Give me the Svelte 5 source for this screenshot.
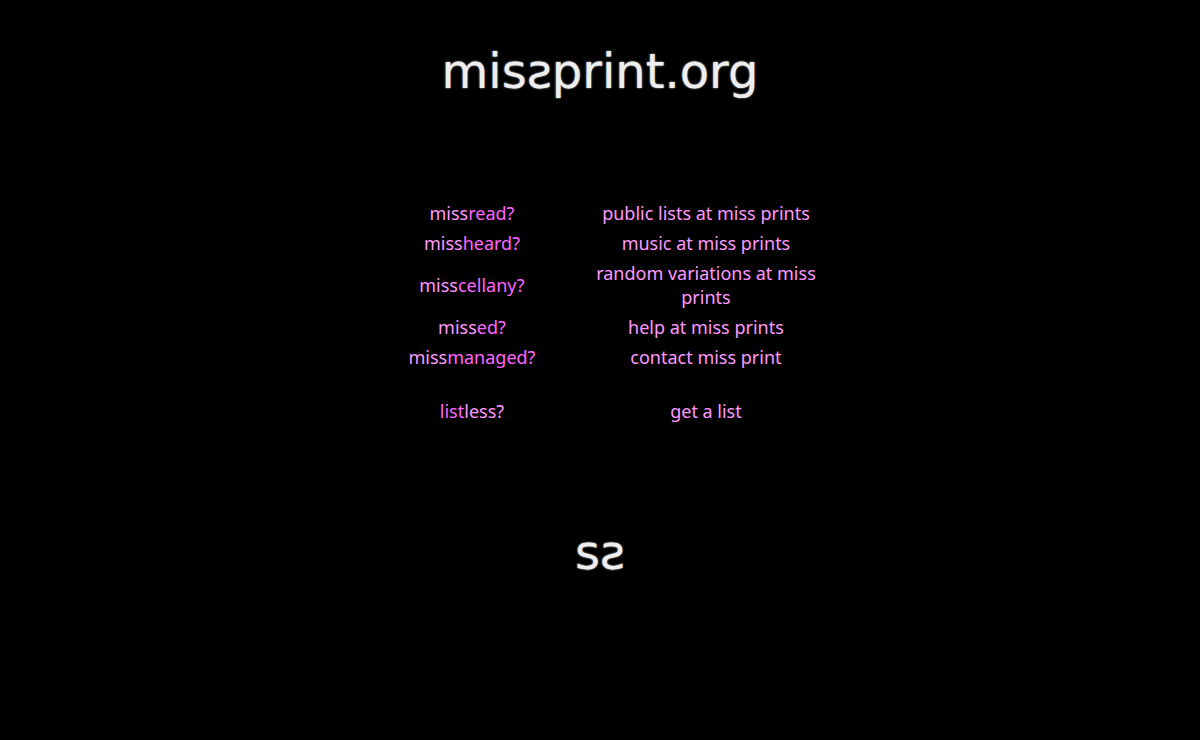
<script>
    const rows = [
        { pale: 'miss', bright: 'read?', text: 'public lists at miss prints' },
        { pale: 'miss', bright: 'heard?', text: 'music at miss prints' },
        { pale: 'miss', bright: 'cellany?', text: 'random variations at miss prints' },
        { pale: 'miss', bright: 'ed?', text: 'help at miss prints' },
        { pale: 'miss', bright: 'managed?', text: 'contact miss print' },
    ]
</script>

<main>
    <h1>mis<span class="flip">s</span>print.org</h1>

    <table>
        <tbody>
            {#each rows as row}
                <tr>
                    <td class="name"><a href="/">{row.pale}<span class="bright">{row.bright}</span></a></td>
                    <td><a href="/">{row.text}</a></td>
                </tr>
            {/each}
            <tr class="last">
                <td><a href="/"><span class="bright">list</span>less?</a></td>
                <td><a href="/">get a list</a></td>
            </tr>
        </tbody>
    </table>

    <div class="mark">s<span class="flip">s</span></div>
</main>

<style>
    :global(body) {
        background: #000;
    }

    main {
        display: flex;
        flex-direction: column;
        align-items: center;
        padding-top: 39px;
        font-family: "Noto Sans", "Open Sans", sans-serif;
        font-size: 18px;
        line-height: 24px;
        text-align: center;
    }

    h1,
    .mark {
        margin: 0;
        color: #eee;
        font-family: "DejaVu Sans", sans-serif;
        font-size: 48px;
        font-weight: 400;
        line-height: 64px;
        text-shadow: 0 0 2px #ccc;
    }

    .flip {
        display: inline-block;
        transform: scaleX(-1);
    }

    table {
        width: 39%;
        margin: 95px 0 94px;
        border-collapse: collapse;
        table-layout: fixed;
    }

    .name {
        width: 44%;
    }

    td {
        padding: 3px;
    }

    .last td {
        padding-top: 27px;
    }

    a {
        color: #f9f;
        text-decoration: none;
    }

    .bright {
        color: #f6f;
    }
</style>
